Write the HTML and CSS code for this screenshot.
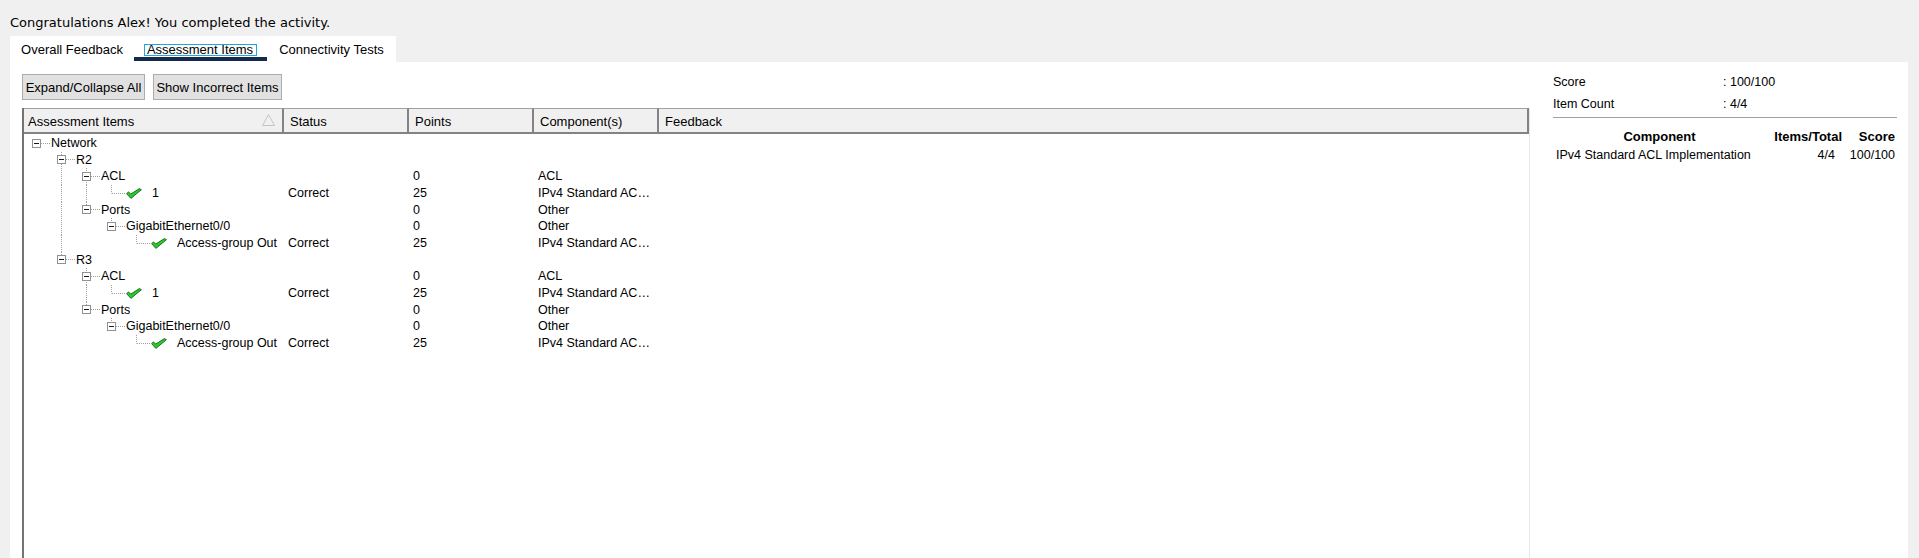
FILE: index.html
```html
<!DOCTYPE html>
<html lang="en">
<head>
<meta charset="utf-8">
<title>Activity Results</title>
<link rel="stylesheet" href="styles.css">
</head>
<body>
<div class="title">Congratulations Alex! You completed the activity.</div>
<div class="tabs">
  <div class="tab t1">Overall Feedback</div>
  <div class="tab t2"><span class="focus">Assessment Items</span></div>
  <div class="tab t3">Connectivity Tests</div>
</div>
<div class="panel">
  <div class="main">
    <div class="buttons">
      <button class="btn b1">Expand/Collapse All</button>
      <button class="btn b2">Show Incorrect Items</button>
    </div>
    <div class="grid">
      <div class="head">
        <div class="hc hc1"><span>Assessment Items</span><svg class="sort" width="13" height="12" viewBox="0 0 13 12"><polygon points="0.5,11.5 6.5,0.5 12.5,11.5" fill="none" stroke="#c4c4c4" stroke-width="1"/></svg></div>
        <div class="hc">Status</div>
        <div class="hc">Points</div>
        <div class="hc">Component(s)</div>
        <div class="hc">Feedback</div>
      </div>
      <div class="body">
        <div class="row">
          <div class="tree"><span class="br root"><span class="box"></span></span><span class="lbl">Network</span></div>
          <div class="c"></div><div class="c"></div><div class="c"></div><div class="c"></div>
        </div>
        <div class="row">
          <div class="tree"><span class="ind"></span><span class="br mid"><span class="box"></span></span><span class="lbl">R2</span></div>
          <div class="c"></div><div class="c"></div><div class="c"></div><div class="c"></div>
        </div>
        <div class="row">
          <div class="tree"><span class="ind"></span><span class="ind ln"></span><span class="br mid"><span class="box"></span></span><span class="lbl">ACL</span></div>
          <div class="c"></div><div class="c">0</div><div class="c">ACL</div><div class="c"></div>
        </div>
        <div class="row">
          <div class="tree"><span class="ind"></span><span class="ind ln"></span><span class="ind ln"></span><span class="br last"></span><svg class="chk" width="16" height="11" viewBox="0 0 16 11"><path d="M0.6 5.6 L2.6 3.9 L4.7 6.1 L13.4 0.6 L15.4 1.7 L4.9 10.4 Z" fill="#2ccb2c" stroke="#13631a" stroke-width="0.9" stroke-linejoin="round"/></svg><span class="lbl">1</span></div>
          <div class="c">Correct</div><div class="c">25</div><div class="c">IPv4 Standard ACL Implementation</div><div class="c"></div>
        </div>
        <div class="row">
          <div class="tree"><span class="ind"></span><span class="ind ln"></span><span class="br last"><span class="box"></span></span><span class="lbl">Ports</span></div>
          <div class="c"></div><div class="c">0</div><div class="c">Other</div><div class="c"></div>
        </div>
        <div class="row">
          <div class="tree"><span class="ind"></span><span class="ind ln"></span><span class="ind"></span><span class="br last"><span class="box"></span></span><span class="lbl">GigabitEthernet0/0</span></div>
          <div class="c"></div><div class="c">0</div><div class="c">Other</div><div class="c"></div>
        </div>
        <div class="row">
          <div class="tree"><span class="ind"></span><span class="ind ln"></span><span class="ind"></span><span class="ind"></span><span class="br last"></span><svg class="chk" width="16" height="11" viewBox="0 0 16 11"><path d="M0.6 5.6 L2.6 3.9 L4.7 6.1 L13.4 0.6 L15.4 1.7 L4.9 10.4 Z" fill="#2ccb2c" stroke="#13631a" stroke-width="0.9" stroke-linejoin="round"/></svg><span class="lbl">Access-group Out</span></div>
          <div class="c">Correct</div><div class="c">25</div><div class="c">IPv4 Standard ACL Implementation</div><div class="c"></div>
        </div>
        <div class="row">
          <div class="tree"><span class="ind"></span><span class="br last"><span class="box"></span></span><span class="lbl">R3</span></div>
          <div class="c"></div><div class="c"></div><div class="c"></div><div class="c"></div>
        </div>
        <div class="row">
          <div class="tree"><span class="ind"></span><span class="ind"></span><span class="br mid"><span class="box"></span></span><span class="lbl">ACL</span></div>
          <div class="c"></div><div class="c">0</div><div class="c">ACL</div><div class="c"></div>
        </div>
        <div class="row">
          <div class="tree"><span class="ind"></span><span class="ind"></span><span class="ind ln"></span><span class="br last"></span><svg class="chk" width="16" height="11" viewBox="0 0 16 11"><path d="M0.6 5.6 L2.6 3.9 L4.7 6.1 L13.4 0.6 L15.4 1.7 L4.9 10.4 Z" fill="#2ccb2c" stroke="#13631a" stroke-width="0.9" stroke-linejoin="round"/></svg><span class="lbl">1</span></div>
          <div class="c">Correct</div><div class="c">25</div><div class="c">IPv4 Standard ACL Implementation</div><div class="c"></div>
        </div>
        <div class="row">
          <div class="tree"><span class="ind"></span><span class="ind"></span><span class="br last"><span class="box"></span></span><span class="lbl">Ports</span></div>
          <div class="c"></div><div class="c">0</div><div class="c">Other</div><div class="c"></div>
        </div>
        <div class="row">
          <div class="tree"><span class="ind"></span><span class="ind"></span><span class="ind"></span><span class="br last"><span class="box"></span></span><span class="lbl">GigabitEthernet0/0</span></div>
          <div class="c"></div><div class="c">0</div><div class="c">Other</div><div class="c"></div>
        </div>
        <div class="row">
          <div class="tree"><span class="ind"></span><span class="ind"></span><span class="ind"></span><span class="ind"></span><span class="br last"></span><svg class="chk" width="16" height="11" viewBox="0 0 16 11"><path d="M0.6 5.6 L2.6 3.9 L4.7 6.1 L13.4 0.6 L15.4 1.7 L4.9 10.4 Z" fill="#2ccb2c" stroke="#13631a" stroke-width="0.9" stroke-linejoin="round"/></svg><span class="lbl">Access-group Out</span></div>
          <div class="c">Correct</div><div class="c">25</div><div class="c">IPv4 Standard ACL Implementation</div><div class="c"></div>
        </div>
      </div>
    </div>
  </div>
  <div class="side">
    <div class="sum">
      <div>Score</div><div>: 100/100</div>
      <div>Item Count</div><div>: 4/4</div>
    </div>
    <div class="sep"></div>
    <div class="comp">
      <div class="h h1">Component</div><div class="h r">Items/Total</div><div class="h r s">Score</div>
      <div class="v1">IPv4 Standard ACL Implementation</div><div class="r v2">4/4</div><div class="r s">100/100</div>
    </div>
  </div>
</div>
</body>
</html>
```

FILE: styles.css
```css
* { box-sizing: border-box; }
html, body { margin: 0; height: 100%; }
body {
  background: #f0f0f0;
  padding: 0 11px 0 10px;
  display: flex;
  flex-direction: column;
  overflow: hidden;
  font-family: "Liberation Sans", Arial, sans-serif;
  color: #000;
}
.title {
  font-family: "DejaVu Sans", sans-serif;
  font-size: 13px;
  line-height: 15px;
  padding-top: 15px;
  margin-bottom: 6px;
}
.tabs {
  display: flex;
  align-self: flex-start;
  background: #fff;
  height: 26px;
}
.tab {
  font-size: 13px;
  line-height: 15px;
  height: 25px;
  padding-top: 6px;
  border-bottom: 4px solid transparent;
  text-align: center;
  white-space: nowrap;
}
.t1 { width: 124px; }
.t2 { width: 133px; border-bottom-color: #132a4c; }
.t3 { width: 129px; }
.focus {
  display: inline-block;
  vertical-align: top;
  margin-top: 2px;
  height: 12px;
  line-height: 10px;
  border: 1px solid #1ea7dc;
  padding: 0 3px 0 2px;
}
.panel {
  flex: 1;
  min-height: 0;
  display: flex;
  background: #fff;
}
.main {
  width: 1520px;
  padding: 12px 0 0 12px;
  display: flex;
  flex-direction: column;
}
.buttons {
  display: flex;
  gap: 8px;
  margin-bottom: 8px;
}
.btn {
  height: 26px;
  padding: 0;
  border: 1px solid #adadad;
  background: #e1e1e1;
  color: #000;
  font: 13px/15px "Liberation Sans", Arial, sans-serif;
  white-space: nowrap;
}
.b1 { width: 123px; }
.b2 { width: 129px; }
.grid {
  flex: 1;
  border-left: 2px solid #747474;
  border-right: 1px solid #e6e6e6;
  background: #fff;
}
.head, .row {
  display: grid;
  grid-template-columns: 260px 125px 125px 125px 1fr;
}
.hc {
  height: 26px;
  font-size: 13px;
  line-height: 15px;
  padding: 5px 0 0 6px;
  background: #f0f0f0;
  border-top: 1px solid #a0a0a0;
  border-right: 2px solid #838383;
  border-bottom: 2px solid #838383;
  white-space: nowrap;
}
.hc1 {
  padding-left: 4px;
  padding-right: 7px;
  display: flex;
  justify-content: space-between;
  align-items: flex-start;
}
.body {
  padding-top: 1px;
}
.row {
  height: 16.667px;
  font-size: 12.5px;
  line-height: 16.667px;
}
.tree {
  display: flex;
  align-items: center;
  padding-left: 2px;
  white-space: nowrap;
  overflow: hidden;
  height: 16.667px;
}
.ind, .br {
  flex: none;
  width: 25px;
  height: 100%;
  display: flex;
  align-items: center;
}
.ind.ln {
  background: repeating-linear-gradient(to bottom, #a0a0a0 0 1px, transparent 1px 2px) 10px 0 / 1px 100% no-repeat;
}
.br.root {
  background: repeating-linear-gradient(to right, #a0a0a0 0 1px, transparent 1px 2px) 11px 50% / 14px 1px no-repeat;
}
.br.mid {
  background:
    repeating-linear-gradient(to right, #a0a0a0 0 1px, transparent 1px 2px) 11px 50% / 14px 1px no-repeat,
    repeating-linear-gradient(to bottom, #a0a0a0 0 1px, transparent 1px 2px) 10px 0 / 1px 100% no-repeat;
}
.br.last {
  background:
    repeating-linear-gradient(to right, #a0a0a0 0 1px, transparent 1px 2px) 11px 50% / 14px 1px no-repeat,
    repeating-linear-gradient(to bottom, #a0a0a0 0 1px, transparent 1px 2px) 10px 0 / 1px 50% no-repeat;
}
.box {
  width: 9px;
  height: 9px;
  margin-left: 6px;
  border: 1px solid #919191;
  background: linear-gradient(#1a1a1a, #1a1a1a) center / 5px 1px no-repeat, #fff;
}
.chk {
  flex: none;
  margin-right: 10px;
}
.c {
  padding: 0 6px 0 4px;
  white-space: nowrap;
  overflow: hidden;
  text-overflow: ellipsis;
}
.side {
  width: 378px;
  padding: 9px 11px 0 23px;
}
.sum {
  display: grid;
  grid-template-columns: 170px 1fr;
  font-size: 12.5px;
  line-height: 22px;
}
.sep {
  height: 1px;
  background: #a0a0a0;
  margin: 2px 0 10px;
}
.comp {
  display: grid;
  grid-template-columns: 213px 76px 55px;
  font-size: 12.5px;
  line-height: 18px;
  white-space: nowrap;
}
.comp .h { font-weight: bold; font-size: 13px; }
.comp .h1 { text-align: center; }
.comp .r { text-align: right; }
.comp .s { padding-right: 2px; }
.comp .v1 { padding-left: 3px; }
.comp .v2 { padding-right: 7px; }
```
